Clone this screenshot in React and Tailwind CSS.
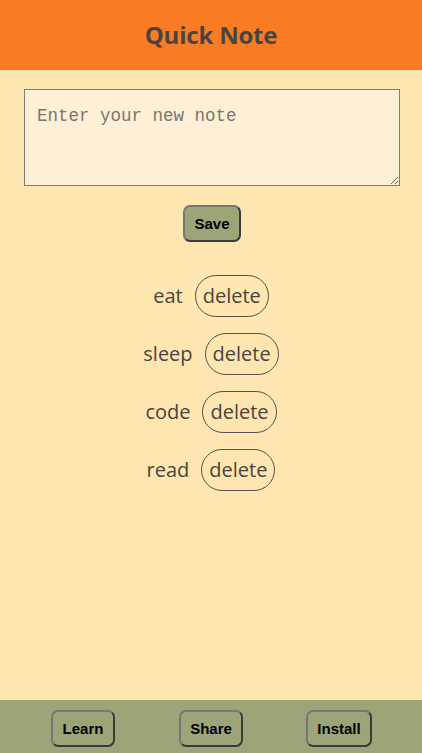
import React, { useState } from 'react';

const btn =
    "border-2 border-[#767676] border-r-[#3a3a3a] border-b-[#3a3a3a] rounded-[7px] bg-[#9ca578] text-black font-bold text-[15px] pt-[2px] font-['Liberation_Sans',Arial,sans-serif]";

const App = () => {
    const [notes, setNotes] = useState(['eat', 'sleep', 'code', 'read']);
    const [text, setText] = useState('');

    const addNote = () => {
        if (!text.trim()) return;
        setNotes([...notes, text.trim()]);
        setText('');
    };

    return (
        <div className="min-h-screen flex flex-col bg-[#fee6b0] font-['Open_Sans',sans-serif]">
            {/* Header */}
            <header className="h-[70px] flex items-center justify-center bg-[#f97c25]">
                <h1 className="text-[24px] font-bold text-[#4b4343] tracking-[-0.2px]">Quick Note</h1>
            </header>

            {/* Main */}
            <main className="flex-1 flex flex-col items-center pt-[19px]">
                <textarea
                    value={text}
                    onChange={(e) => setText(e.target.value)}
                    placeholder="Enter your new note"
                    className="self-start ml-[24px] w-[376px] h-[97px] bg-[#fef0d6] border border-[#807c78] pl-3 pr-3 pt-[14px] pb-2 text-[17.5px] leading-[24px] font-['Liberation_Mono',monospace] placeholder:text-[#7a7670] outline-none"
                />
                <button onClick={addNote} className={`${btn} mt-[19px] ml-[2px] w-[58px] h-[37px]`}>
                    Save
                </button>

                <ul className="mt-[33px] flex flex-col items-center gap-[16px]">
                    {notes.map((n, i) => (
                        <li key={i} className="flex items-center gap-[12px] text-[20px] text-[#4b4343]">
                            <span>{n}</span>
                            <button
                                onClick={() => setNotes(notes.filter((_, j) => j !== i))}
                                className="h-[42px] px-[7px] border border-[#5a5050] rounded-full"
                            >
                                delete
                            </button>
                        </li>
                    ))}
                </ul>
            </main>

            {/* Footer */}
            <footer className="h-[53px] grid grid-cols-3 items-start pt-[10px] px-[19px] bg-[#9ca578]">
                <div className="flex justify-center">
                    <button className={`${btn} w-[64px] h-[37px]`}>Learn</button>
                </div>
                <div className="flex justify-center">
                    <button className={`${btn} w-[64px] h-[37px]`}>Share</button>
                </div>
                <div className="flex justify-center">
                    <button className={`${btn} w-[66px] h-[37px]`}>Install</button>
                </div>
            </footer>
        </div>
    );
};

export default App;
